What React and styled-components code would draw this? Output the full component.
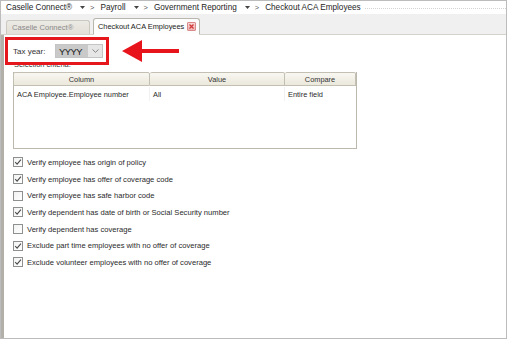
import React from 'react';
import styled, { createGlobalStyle } from 'styled-components';

const GlobalStyle = createGlobalStyle`
  html, body {
    margin: 0;
    padding: 0;
    background: #ffffff;
  }
  * {
    box-sizing: border-box;
  }
`;

const Frame = styled.div`
  width: 507px;
  height: 339px;
  border: 1px solid #bcbcbc;
  display: flex;
  flex-direction: column;
  font-family: "Liberation Sans", Arial, sans-serif;
  background: #ffffff;
  overflow: hidden;
`;

const Breadcrumb = styled.div`
  height: 13px;
  display: flex;
  align-items: center;
  padding-left: 5px;
  font-size: 8.2px;
  color: #1e1e1e;
  background: #ffffff;
`;

const Crumb = styled.span`
  white-space: nowrap;
`;

const CrumbSep = styled.span`
  display: flex;
  align-items: center;
  gap: 5px;
  margin: 0 6px 0 8px;
  color: #555;
  font-size: 7.5px;
`;

const DottedRule = styled.div`
  flex: 1;
  margin: 1px 0 0 4px;
  border-top: 1px dotted #d4d4d4;
`;

const TabStrip = styled.div`
  height: 21px;
  display: flex;
  align-items: flex-end;
  gap: 3px;
  padding-left: 5px;
  background: #f0f0f0;
  border-bottom: 1px solid #d6d3cb;
`;

const Tab = styled.div`
  height: ${p => (p.$active ? '17px' : '14px')};
  margin-bottom: ${p => (p.$active ? '-1px' : '0')};
  display: flex;
  align-items: center;
  justify-content: space-between;
  padding: 0 3px 0 ${p => (p.$active ? '4px' : '5px')};
  width: ${p => (p.$active ? '107px' : '84px')};
  border: 1px solid ${p => (p.$active ? '#b9b6ae' : '#cbc8c0')};
  border-bottom: ${p => (p.$active ? '1px solid #ffffff' : 'none')};
  border-radius: 3px 3px 0 0;
  background: ${p => (p.$active ? '#fdfdfd' : 'linear-gradient(#eceae4, #e2dfd8)')};
  color: ${p => (p.$active ? '#222' : '#8a8a8a')};
  font-size: ${p => (p.$active ? '7.4px' : '7.6px')};
  white-space: nowrap;
`;

const CloseBox = styled.span`
  width: 9px;
  height: 9px;
  display: flex;
  align-items: center;
  justify-content: center;
  border: 1px solid #d98a8a;
  border-radius: 1px;
  background: linear-gradient(#f8d7d7, #efb3b3);
`;

const Content = styled.div`
  flex: 1;
  border-left: 3px solid #b3b0aa;
  background: #ffffff;
  padding: 2px 0 0 1px;
  display: flex;
  flex-direction: column;
  font-size: 7.4px;
  color: #2a2a2a;
`;

const TaxRow = styled.div`
  display: flex;
  align-items: center;
  gap: 13px;
`;

const Callout = styled.div`
  position: relative;
  z-index: 1;
  width: 104px;
  height: 28px;
  border: 3px solid #e5171d;
  display: flex;
  align-items: center;
  justify-content: space-between;
  padding: 0 3px 0 5px;
`;

const FieldLabel = styled.span`
  color: #333;
  font-size: 8px;
`;

const Combo = styled.div`
  width: 48px;
  height: 14px;
  display: flex;
  border: 1px solid #c4c4c4;
  background: #e4e4e4;
`;

const ComboValue = styled.div`
  flex: 1;
  display: flex;
  align-items: center;
  padding-left: 3px;
  background: #c9c9c9;
  font-size: 9.5px;
  color: #1a1a1a;
  letter-spacing: -0.6px;
`;

const ComboButton = styled.div`
  width: 14px;
  display: flex;
  align-items: center;
  justify-content: center;
  background: #e6e6e6;
`;

const CriteriaLabel = styled.div`
  margin: -5px 0 0 9px;
  line-height: 10px;
  color: #333;
`;

const Grid = styled.div`
  margin: 2px 0 0 8px;
  width: 344px;
  height: 77px;
  border: 1px solid #bcb8ad;
  border-top: none;
  display: flex;
  flex-direction: column;
`;

const GridHeader = styled.div`
  display: grid;
  grid-template-columns: 136px 135px 1fr;
  height: 14px;
`;

const HeadCell = styled.div`
  display: flex;
  align-items: center;
  justify-content: center;
  border: 1px solid #c3bfb2;
  border-left: ${p => (p.$first ? '1px solid #c3bfb2' : 'none')};
  border-radius: 2px 2px 0 0;
  background: linear-gradient(#f8f7f1, #ebe8dc);
  color: #333;
  margin-left: ${p => (p.$first ? '-1px' : '0')};
`;

const GridRow = styled.div`
  display: grid;
  grid-template-columns: 136px 135px 1fr;
  height: 14px;
  margin-top: 1px;
`;

const Cell = styled.div`
  display: flex;
  align-items: center;
  padding-left: 3px;
  border-right: ${p => (p.$last ? 'none' : '1px solid #f1f1f1')};
  white-space: nowrap;
`;

const OptionList = styled.div`
  margin: 5px 0 0 8px;
  display: flex;
  flex-direction: column;
`;

const Option = styled.label`
  height: 16.7px;
  display: flex;
  align-items: center;
  gap: 4px;
  white-space: nowrap;
  font-size: 7.6px;
`;

const Box = styled.span`
  width: 10px;
  height: 10px;
  display: flex;
  align-items: center;
  justify-content: center;
  border: 1px solid #8e8f8f;
  background: linear-gradient(135deg, #f2f2f2, #ffffff);
`;

const crumbs = ['Caselle Connect®', 'Payroll', 'Government Reporting', 'Checkout ACA Employees'];

const options = [
  { text: 'Verify employee has origin of policy', checked: true },
  { text: 'Verify employee has offer of coverage code', checked: true },
  { text: 'Verify employee has safe harbor code', checked: false },
  { text: 'Verify dependent has date of birth or Social Security number', checked: true },
  { text: 'Verify dependent has coverage', checked: false },
  { text: 'Exclude part time employees with no offer of coverage', checked: true },
  { text: 'Exclude volunteer employees with no offer of coverage', checked: true },
];

const Caret = () => (
  <svg width="5" height="3" viewBox="0 0 5 3">
    <path d="M0 0 L5 0 L2.5 3 Z" fill="#444" />
  </svg>
);

const Check = () => (
  <svg width="8" height="8" viewBox="0 0 8 8">
    <path d="M1.2 4.2 L3.1 6.1 L6.9 1.6" fill="none" stroke="#4a4a4a" strokeWidth="1.1" />
  </svg>
);

const Chevron = () => (
  <svg width="7" height="4" viewBox="0 0 7 4">
    <path d="M0.5 0.5 L3.5 3.3 L6.5 0.5" fill="none" stroke="#7a7a7a" strokeWidth="0.9" />
  </svg>
);

const CloseX = () => (
  <svg width="7" height="7" viewBox="0 0 7 7">
    <path d="M1.5 1.5 L5.5 5.5 M5.5 1.5 L1.5 5.5" stroke="#d23a3a" strokeWidth="1.3" />
  </svg>
);

const RedArrow = () => (
  <svg width="58" height="22" viewBox="0 0 58 22">
    <path d="M0 11 L20 0 L20 9 L57 9 L57 13 L20 13 L20 22 Z" fill="#e8141c" />
  </svg>
);

const App = () => {
  return (
    <>
      <GlobalStyle />
      <Frame>
        <Breadcrumb>
          {crumbs.map((c, i) => (
            <React.Fragment key={c}>
              <Crumb>{c}</Crumb>
              {i < crumbs.length - 1 ? (
                <CrumbSep>
                  <Caret />
                  <span>&gt;</span>
                </CrumbSep>
              ) : null}
            </React.Fragment>
          ))}
          <DottedRule />
        </Breadcrumb>
        <TabStrip>
          <Tab>Caselle Connect®</Tab>
          <Tab $active>
            Checkout ACA Employees
            <CloseBox>
              <CloseX />
            </CloseBox>
          </Tab>
        </TabStrip>
        <Content>
          <TaxRow>
            <Callout>
              <FieldLabel>Tax year:</FieldLabel>
              <Combo>
                <ComboValue>YYYY</ComboValue>
                <ComboButton>
                  <Chevron />
                </ComboButton>
              </Combo>
            </Callout>
            <RedArrow />
          </TaxRow>
          <CriteriaLabel>Selection criteria:</CriteriaLabel>
          <Grid>
            <GridHeader>
              <HeadCell $first>Column</HeadCell>
              <HeadCell>Value</HeadCell>
              <HeadCell>Compare</HeadCell>
            </GridHeader>
            <GridRow>
              <Cell>ACA Employee.Employee number</Cell>
              <Cell>All</Cell>
              <Cell $last>Entire field</Cell>
            </GridRow>
          </Grid>
          <OptionList>
            {options.map(o => (
              <Option key={o.text}>
                <Box>{o.checked ? <Check /> : null}</Box>
                {o.text}
              </Option>
            ))}
          </OptionList>
        </Content>
      </Frame>
    </>
  );
};

export default App;
